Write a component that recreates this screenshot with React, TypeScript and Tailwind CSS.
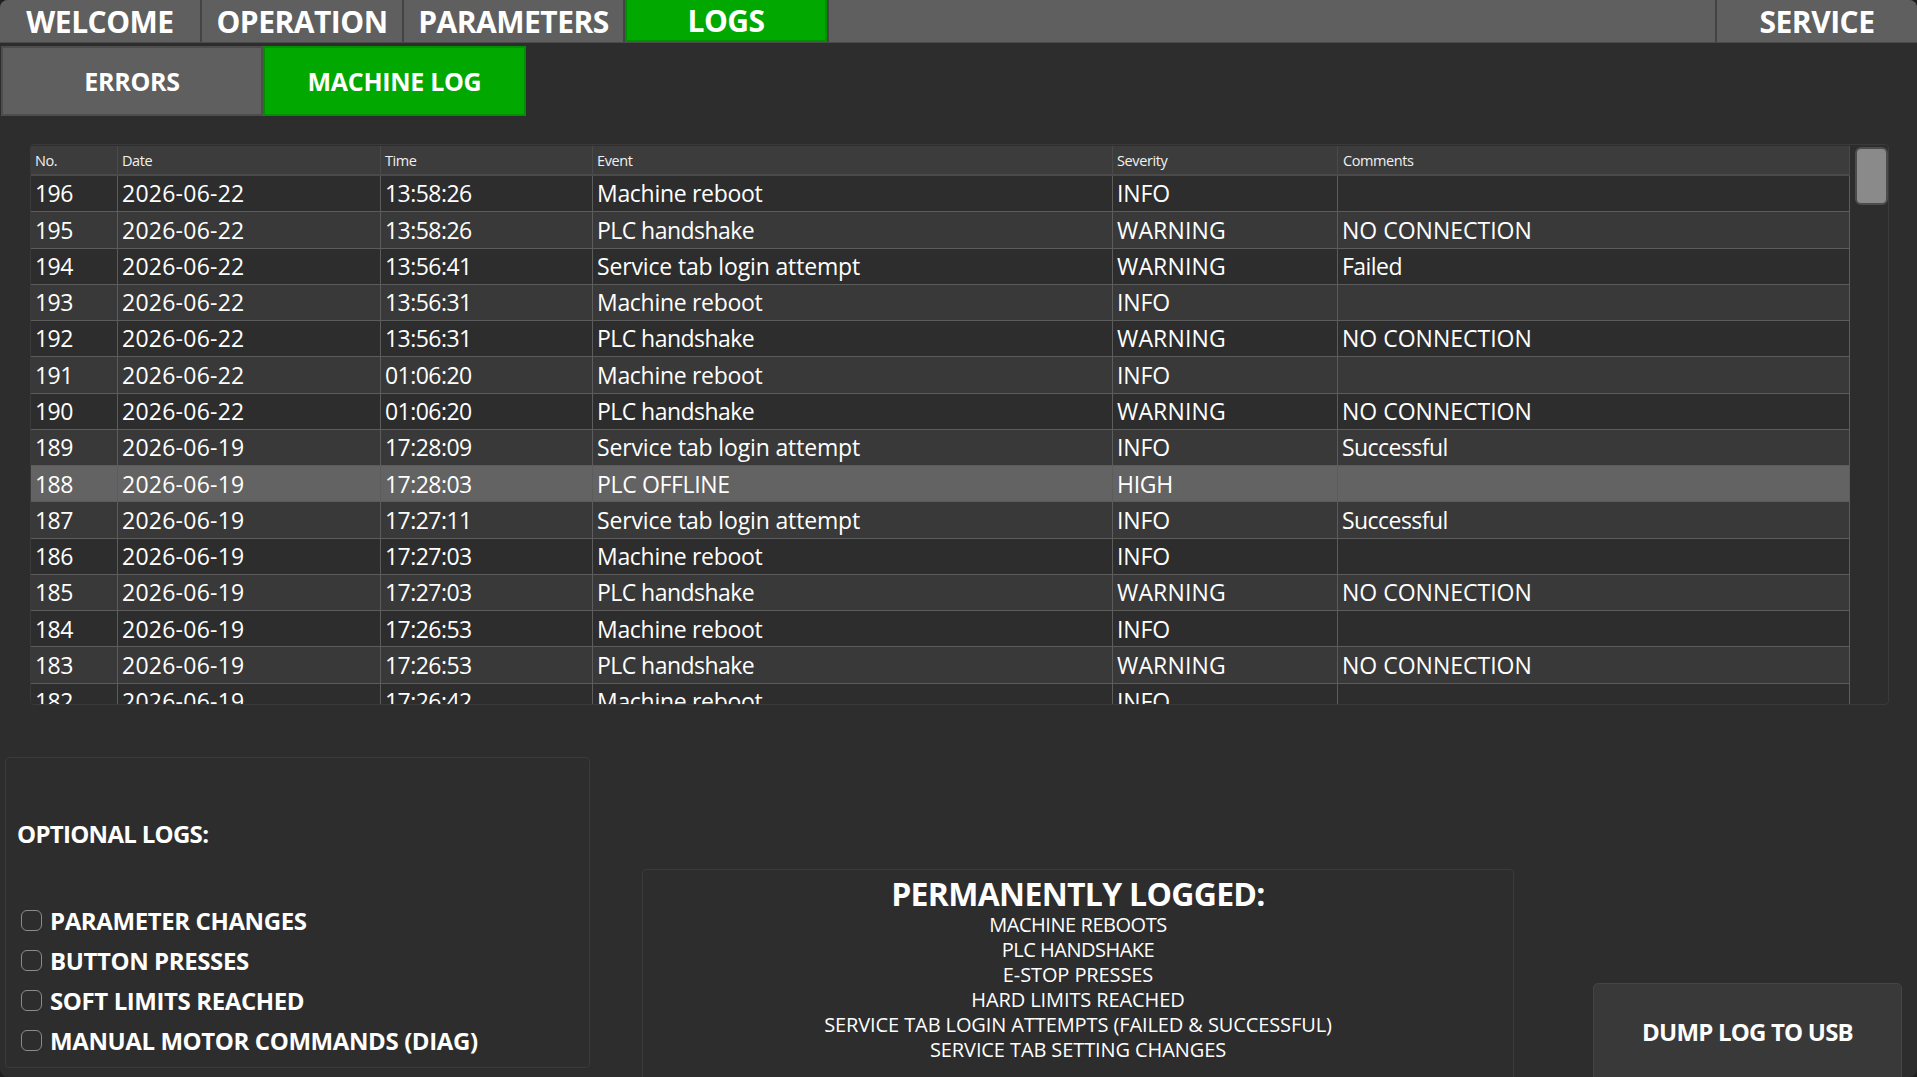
import React from "react";

const rows: [string, string, string, string, string, string][] = [
  ["196", "2026-06-22", "13:58:26", "Machine reboot", "INFO", ""],
  ["195", "2026-06-22", "13:58:26", "PLC handshake", "WARNING", "NO CONNECTION"],
  ["194", "2026-06-22", "13:56:41", "Service tab login attempt", "WARNING", "Failed"],
  ["193", "2026-06-22", "13:56:31", "Machine reboot", "INFO", ""],
  ["192", "2026-06-22", "13:56:31", "PLC handshake", "WARNING", "NO CONNECTION"],
  ["191", "2026-06-22", "01:06:20", "Machine reboot", "INFO", ""],
  ["190", "2026-06-22", "01:06:20", "PLC handshake", "WARNING", "NO CONNECTION"],
  ["189", "2026-06-19", "17:28:09", "Service tab login attempt", "INFO", "Successful"],
  ["188", "2026-06-19", "17:28:03", "PLC OFFLINE", "HIGH", ""],
  ["187", "2026-06-19", "17:27:11", "Service tab login attempt", "INFO", "Successful"],
  ["186", "2026-06-19", "17:27:03", "Machine reboot", "INFO", ""],
  ["185", "2026-06-19", "17:27:03", "PLC handshake", "WARNING", "NO CONNECTION"],
  ["184", "2026-06-19", "17:26:53", "Machine reboot", "INFO", ""],
  ["183", "2026-06-19", "17:26:53", "PLC handshake", "WARNING", "NO CONNECTION"],
  ["182", "2026-06-19", "17:26:42", "Machine reboot", "INFO", ""],
];

const widths = ["w-[87px]", "w-[263px]", "w-[212px]", "w-[520px]", "w-[225px]", "w-[512px]"];
const heads = ["No.", "Date", "Time", "Event", "Severity", "Comments"];

const cellTracking: Record<string, string> = {
  "Machine reboot": "tracking-[-0.3px]",
  "PLC handshake": "tracking-[-0.55px]",
  "Service tab login attempt": "tracking-[-0.15px]",
  "PLC OFFLINE": "tracking-[-0.35px]",
  WARNING: "tracking-[0.15px]",
  INFO: "tracking-[-0.1px]",
  HIGH: "tracking-[-0.3px]",
  "NO CONNECTION": "tracking-[0px]",
};

function trackingFor(col: number, text: string) {
  if (col === 1) return "tracking-[0.25px]";
  return cellTracking[text] ?? "tracking-[-0.55px]";
}

function NavTab({ label, width, active }: { label: string; width: string; active?: boolean }) {
  return (
    <div
      className={`${width} h-[42px] flex items-center justify-center pt-[1px] text-[30px] font-bold tracking-[-0.5px] text-white ${
        active ? "bg-[#00a800] border-x-2 border-b-2 border-[#008f00]" : "bg-[#5f5f5f]"
      }`}
    >
      {label}
    </div>
  );
}

function Check({ label }: { label: string }) {
  return (
    <div className="flex items-center h-[40px]">
      <div className="w-[21px] h-[21px] rounded-[6px] border border-[#8a8a8a] ml-[4px] mr-[8px] mb-[2px] shrink-0" />
      <span className="text-[24px] font-bold tracking-[-0.4px] text-white whitespace-nowrap">{label}</span>
    </div>
  );
}

const permanent: [string, string][] = [
  ["MACHINE REBOOTS", "tracking-[-0.45px]"],
  ["PLC HANDSHAKE", "tracking-[-0.5px]"],
  ["E-STOP PRESSES", "tracking-[-0.1px]"],
  ["HARD LIMITS REACHED", "tracking-[-0.1px]"],
  ["SERVICE TAB LOGIN ATTEMPTS (FAILED & SUCCESSFUL)", "tracking-[-0.1px]"],
  ["SERVICE TAB SETTING CHANGES", "tracking-[-0.1px]"],
];

export default function App() {
  return (
    <div className="bg-[#1f1f1f] w-[1917px] h-[1077px] overflow-hidden font-['Open_Sans',sans-serif]">
      <div className="bg-[#2d2d2d] w-full h-full rounded-[8px] overflow-hidden flex flex-col text-white">
        {/* main tabs */}
        <div className="flex h-[43px] shrink-0 border-b border-[#4a4a4a] gap-[2px] bg-[#444444]">
          <NavTab label="WELCOME" width="w-[200px]" />
          <NavTab label="OPERATION" width="w-[200px]" />
          <NavTab label="PARAMETERS" width="w-[219px]" />
          <NavTab label="LOGS" width="w-[202px]" active />
          <div className="flex-1 bg-[#5f5f5f]" />
          <NavTab label="SERVICE" width="w-[200px]" />
        </div>

        {/* sub tabs */}
        <div className="flex mt-[3px] ml-[1px] h-[70px] shrink-0">
          <div className="w-[262px] bg-[#5f5f5f] border-2 border-[#4d4d4d] flex items-center justify-center pt-[2px] text-[25px] font-bold tracking-[-0.3px]">
            ERRORS
          </div>
          <div className="w-[263px] bg-[#00a800] border-2 border-[#008f00] flex items-center justify-center pt-[2px] text-[25px] font-bold tracking-[-0.3px]">
            MACHINE LOG
          </div>
        </div>

        {/* table */}
        <div className="mt-[28px] ml-[30px] w-[1859px] h-[561px] shrink-0 border border-[#3a3a3a] rounded-[4px] overflow-hidden flex">
          <div className="w-[1819px] shrink-0 overflow-hidden">
            <div className="flex h-[30px] bg-[#3c3c3c] border-b-2 border-[#4a4a4a] mt-px">
              {heads.map((h, i) => (
                <div
                  key={h}
                  className={`${widths[i]} shrink-0 border-r border-[#4a4a4a] ${i === 5 ? "pl-[5px]" : "pl-[4px]"} pt-[1px] text-[14.5px] tracking-[-0.4px] text-[#f0f0f0] flex items-center`}
                >
                  {h}
                </div>
              ))}
            </div>
            {rows.map((r, ri) => {
              const selected = r[0] === "188";
              const bg = selected ? "bg-[#636363]" : ri % 2 === 0 ? "bg-[#2d2d2d]" : "bg-[#393939]";
              return (
                <div key={r[0]} className={`flex h-[36.27px] shrink-0 border-b border-[#5c5c5c] ${bg}`}>
                  {r.map((c, i) => (
                    <div
                      key={i}
                      className={`${widths[i]} shrink-0 border-r border-[#5c5c5c] pl-[4px] text-[23px] ${trackingFor(i, c)} whitespace-nowrap flex items-center`}
                    >
                      {c}
                    </div>
                  ))}
                </div>
              );
            })}
          </div>
          <div className="flex-1 pl-[5px] pt-[2px]">
            <div className="w-[33px] h-[58px] rounded-[6px] bg-[#8a8a8a] border-2 border-[#4c4c4c]" />
          </div>
        </div>

        {/* bottom */}
        <div className="flex items-start flex-1 min-h-0">
          <div className="ml-[5px] mt-[52px] w-[585px] h-[311px] shrink-0 border border-[#3a3a3a] rounded-[4px] pl-[11px] flex flex-col">
            <div className="mt-[57px] h-[38px] flex items-center text-[24px] font-bold tracking-[-0.7px] whitespace-nowrap">
              OPTIONAL LOGS:
            </div>
            <div className="mt-[48px] flex flex-col">
              <Check label="PARAMETER CHANGES" />
              <Check label="BUTTON PRESSES" />
              <Check label="SOFT LIMITS REACHED" />
              <Check label="MANUAL MOTOR COMMANDS (DIAG)" />
            </div>
          </div>
          <div className="ml-[52px] mt-[164px] w-[872px] h-[260px] shrink-0 border border-[#3a3a3a] rounded-[4px] flex flex-col items-center">
            <div className="mt-[6px] h-[36px] leading-[36px] text-[32px] font-bold tracking-[-0.7px]">
              PERMANENTLY LOGGED:
            </div>
            <div className="text-[20px] leading-[25px] text-center whitespace-nowrap">
              {permanent.map(([t, c]) => (
                <div key={t} className={c}>
                  {t}
                </div>
              ))}
            </div>
          </div>
          <div className="ml-[79px] mt-[278px] w-[309px] h-[120px] shrink-0 bg-[#393939] border border-[#454545] rounded-[5px] flex items-start justify-center pt-[30px] text-[24px] font-bold tracking-[-0.8px] whitespace-nowrap">
            DUMP LOG TO USB
          </div>
        </div>
      </div>
    </div>
  );
}
